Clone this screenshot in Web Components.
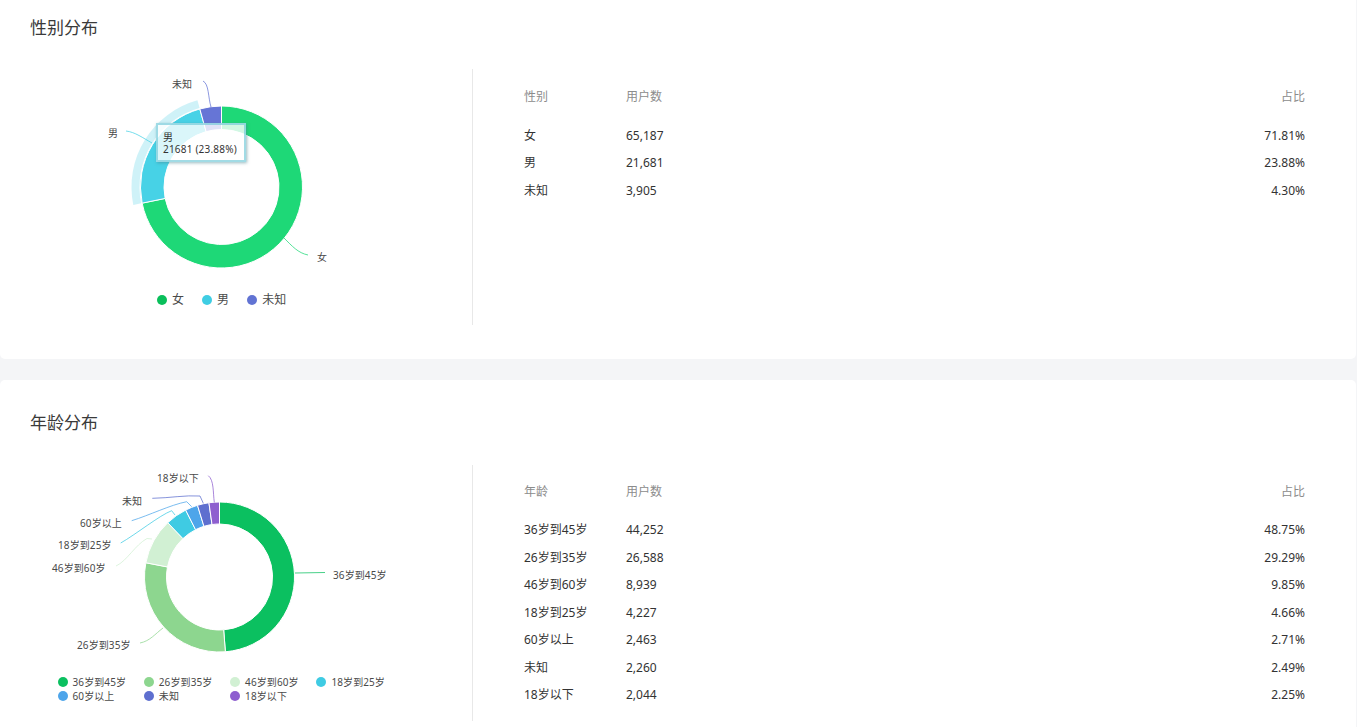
<!DOCTYPE html>
<html lang="zh">
<head>
<meta charset="utf-8">
<title>用户分布</title>
<style>
    html, body {
        margin: 0;
        height: 100%;
        overflow: hidden;
        background: #f4f5f7;
        font-family: "Noto Sans", "Noto Sans CJK SC", sans-serif;
    }
    #page {
        padding-right: 1px;
        margin-top: -15.6px;
    }
    #page stat-card + stat-card {
        margin-top: 20.8px;
    }
</style>
</head>
<body>
<div id="page">
    <stat-card heading="性别分布">
        <donut-chart slot="chart" id="gender"></donut-chart>
        <stat-table slot="table" id="gender-table" label="性别" head-gap="11.5"></stat-table>
    </stat-card>
    <stat-card heading="年龄分布">
        <donut-chart slot="chart" id="age"></donut-chart>
        <stat-table slot="table" id="age-table" label="年龄" head-gap="10.5"></stat-table>
    </stat-card>
</div>

<script>
const SVG_FONT = `"Noto Sans", "Noto Sans CJK SC", sans-serif`;

class StatCard extends HTMLElement {
    constructor() {
        super();
        this.attachShadow({ mode: "open" });
        this.shadowRoot.innerHTML = `
            <style>
                :host {
                    display: block;
                    background: #fff;
                    border-radius: 5px;
                    padding: 32px 0 34px 0;
                }
                h2 {
                    margin: .2px 0 30.8px 30px;
                    font-size: 17px;
                    line-height: 22px;
                    font-weight: 400;
                    color: #3a3a3a;
                }
                #body {
                    display: flex;
                    height: 256px;
                }
                #chart {
                    flex: 0 0 472px;
                    border-right: 1px solid #e8e8e8;
                }
                #table {
                    flex: 1;
                    padding: 0 51px 0 51px;
                }
            </style>
            <h2>${this.getAttribute("heading")}</h2>
            <div id="body">
                <div id="chart"><slot name="chart"></slot></div>
                <div id="table"><slot name="table"></slot></div>
            </div>
        `;
    }
}

class StatTable extends HTMLElement {
    constructor() {
        super();
        this.attachShadow({ mode: "open" });
    }

    set rows(rows) {
        this.shadowRoot.innerHTML = `
            <style>
                :host {
                    display: block;
                    padding-top: 13.2px;
                    font-size: 12px;
                    color: #333;
                }
                .row {
                    display: grid;
                    grid-template-columns: 102px 1fr auto;
                    height: 27.5px;
                    line-height: 27.5px;
                }
                .head {
                    color: #8c8c8c;
                    margin-bottom: ${this.getAttribute("head-gap")}px;
                }
            </style>
            <div class="row head"><span>${this.getAttribute("label")}</span><span>用户数</span><span>占比</span></div>
            ${rows.map(r => `<div class="row"><span>${r[0]}</span><span>${r[1]}</span><span>${r[2]}</span></div>`).join("")}
        `;
    }
}

class DonutChart extends HTMLElement {
    constructor() {
        super();
        this.attachShadow({ mode: "open" });
    }

    // angle is measured clockwise from 12 o'clock, in percent of the circle
    point(cx, cy, r, pct) {
        const a = pct / 100 * Math.PI * 2;
        return [(cx + Math.sin(a) * r).toFixed(2), (cy - Math.cos(a) * r).toFixed(2)];
    }

    arc(c, r0, r1, from, to) {
        const large = to - from > 50 ? 1 : 0;
        const [x0, y0] = this.point(c.x, c.y, r1, from);
        const [x1, y1] = this.point(c.x, c.y, r1, to);
        const [x2, y2] = this.point(c.x, c.y, r0, to);
        const [x3, y3] = this.point(c.x, c.y, r0, from);
        return `M${x0} ${y0}A${r1} ${r1} 0 ${large} 1 ${x1} ${y1}L${x2} ${y2}A${r0} ${r0} 0 ${large} 0 ${x3} ${y3}Z`;
    }

    set config(cfg) {
        const c = cfg.center;
        let at = 0;
        const sectors = cfg.series.map(s => {
            const from = at;
            at += s.pct;
            let out = `<path d="${this.arc(c, c.inner, c.outer, from, at)}" fill="${s.ring || s.color}" stroke="#fff" stroke-width="1"/>`;
            if (s.active) {
                out = `<path d="${this.arc(c, c.outer + 1, c.outer + 9, from, at)}" fill="${s.color}" opacity=".25"/>` + out;
            }
            return out;
        }).join("");
        const leaders = cfg.series.map(s =>
            `<path d="${s.line}" fill="none" stroke="${s.ring || s.color}" stroke-width="1" stroke-opacity=".75"/>`).join("");
        const labels = cfg.series.map(s =>
            `<text x="${s.tx}" y="${s.ty}" text-anchor="${s.anchor || "start"}">${s.name}</text>`).join("");

        const legend = cfg.series.map(s =>
            `<span class="item"><i style="background:${s.color}"></i>${s.name}</span>`).join("");

        const tip = cfg.tooltip;
        this.shadowRoot.innerHTML = `
            <style>
                :host {
                    display: block;
                    position: relative;
                    height: 100%;
                }
                svg {
                    display: block;
                    width: 472px;
                    height: ${cfg.height}px;
                }
                text {
                    font-family: ${SVG_FONT};
                    font-size: 10px;
                    letter-spacing: .1px;
                    fill: #4a4a4a;
                }
                #legend {
                    display: ${cfg.columns ? "grid" : "flex"};
                    ${cfg.columns ? `grid-template-columns: repeat(${cfg.columns}, 86.3px); margin-left: 57.5px;` : "gap: 18px; margin-left: 157px;"}
                    font-size: ${cfg.legendSize}px;
                    line-height: ${cfg.legendLine}px;
                    letter-spacing: .1px;
                    color: #4a4a4a;
                }
                .item {
                    display: flex;
                    align-items: center;
                    white-space: nowrap;
                }
                .item i {
                    flex: none;
                    width: 10px;
                    height: 10px;
                    border-radius: 50%;
                    margin-right: ${cfg.legendGap}px;
                }
                #tip {
                    position: absolute;
                    box-sizing: border-box;
                    left: ${tip ? tip.x : 0}px;
                    top: ${tip ? tip.y : 0}px;
                    display: ${tip ? "block" : "none"};
                    width: 90px;
                    height: 39px;
                    padding: 6px 0 0 5px;
                    font-size: 10px;
                    line-height: 12px;
                    letter-spacing: .2px;
                    color: #333;
                    white-space: pre;
                    background: rgba(255, 255, 255, .8);
                    border: 2px solid rgba(110, 200, 215, .65);
                    box-shadow: 1px 1px 3px rgba(70, 130, 140, .55);
                }
            </style>
            <svg viewBox="0 0 472 ${cfg.height}">${sectors}${leaders}${labels}</svg>
            <div id="legend">${legend}</div>
            <div id="tip">${tip ? tip.text : ""}</div>
        `;
    }
}

customElements.define("stat-card", StatCard);
customElements.define("stat-table", StatTable);
customElements.define("donut-chart", DonutChart);

// chart coordinates are page coordinates minus the top of the chart row (69 and 465)
document.getElementById("gender").config = {
    height: 223,
    center: { x: 221.5, y: 118, inner: 57.5, outer: 81 },
    legendSize: 12,
    legendLine: 16,
    legendGap: 5,
    tooltip: { x: 156, y: 54, text: "男\n21681 (23.88%)" },
    series: [
        { name: "女", pct: 71.81, color: "#0abf5b", ring: "#1ed877", tx: 317, ty: 191.5,
          line: "M284 169C292 177 298 184 308 186" },
        { name: "男", pct: 23.88, color: "#3fcde3", ring: "#47d2e6", active: true, tx: 108, ty: 67.5,
          line: "M152 74C143 69 135 63 126 62" },
        { name: "未知", pct: 4.31, color: "#6173d3", ring: "#6675d6", tx: 172, ty: 18.5,
          line: "M211 38C208 28 209 15 203 12" },
    ],
};
document.getElementById("age").config = {
    height: 210,
    center: { x: 219.5, y: 112, inner: 53, outer: 75 },
    legendSize: 10,
    legendLine: 14,
    legendGap: 5,
    series: [
        { name: "36岁到45岁", pct: 48.75, color: "#0bc060", tx: 333, ty: 113.5,
          line: "M295 108L325 107.5" },
        { name: "26岁到35岁", pct: 29.29, color: "#8dd68f", tx: 77, ty: 183.5,
          line: "M163 163C155 169 150 176 140 178" },
        { name: "46岁到60岁", pct: 9.85, color: "#d1f0d3", tx: 52, ty: 106.5,
          line: "M152 74L147 73.5C135 80 127 96 116 101" },
        { name: "18岁到25岁", pct: 4.66, color: "#3fcbe3", tx: 58, ty: 83.5,
          line: "M175 50L171.7 45.7C160 50 135 70 120.7 78" },
        { name: "60岁以上", pct: 2.71, color: "#4ea5ea", tx: 80, ty: 61.5,
          line: "M191.7 41.7L186.7 36.7C170 40 150 50 131.7 55.7" },
        { name: "未知", pct: 2.49, color: "#5e6fcf", tx: 122, ty: 39.5,
          line: "M203.3 38.3L200 31C185 30 170 33 152.3 33.3" },
        { name: "18岁以下", pct: 2.25, color: "#8e5fcf", tx: 157, ty: 16.5,
          line: "M214.3 37.3C213 28 214 15 208.3 10.7" },
    ],
    columns: 4,
};

document.getElementById("gender-table").rows = [
    ["女", "65,187", "71.81%"],
    ["男", "21,681", "23.88%"],
    ["未知", "3,905", "4.30%"],
];
document.getElementById("age-table").rows = [
    ["36岁到45岁", "44,252", "48.75%"],
    ["26岁到35岁", "26,588", "29.29%"],
    ["46岁到60岁", "8,939", "9.85%"],
    ["18岁到25岁", "4,227", "4.66%"],
    ["60岁以上", "2,463", "2.71%"],
    ["未知", "2,260", "2.49%"],
    ["18岁以下", "2,044", "2.25%"],
];
</script>
</body>
</html>
